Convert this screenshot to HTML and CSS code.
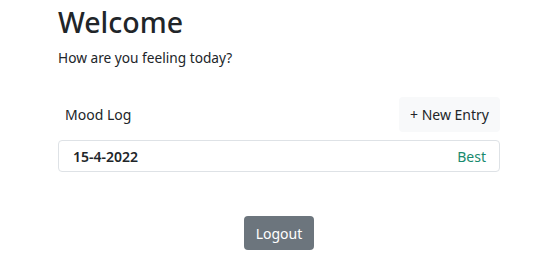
FILE: index.html
```html
<!DOCTYPE html>
<html lang="en">
<head>
<meta charset="utf-8">
<link rel="stylesheet" href="styles.css">
</head>
<body>
<div class="container">
  <h1 class="title">Welcome</h1>
  <p class="lead">How are you feeling today?</p>
  <div class="log-head">
    <span class="log-title">Mood Log</span>
    <button class="btn btn-light">+ New Entry</button>
  </div>
  <ul class="list">
    <li class="item"><span class="date">15-4-2022</span><span class="mood">Best</span></li>
  </ul>
  <div class="actions">
    <button class="btn btn-secondary">Logout</button>
  </div>
</div>
</body>
</html>
```
FILE: styles.css
```css
* { box-sizing: border-box; }
body {
  margin: 0;
  font-family: "Noto Sans", "Open Sans", sans-serif;
  color: #212529;
  background: #fff;
  font-size: 14px;
}
.container {
  width: 442px;
  margin: 0 0 0 58px;
  padding-top: 5px;
}
.title {
  margin: 0;
  font-size: 28.5px;
  font-weight: 500;
  line-height: 1.2;
}
.lead {
  margin: 9px 0 0;
  font-size: 13.7px;
}
.log-head {
  margin-top: 30px;
  display: flex;
  justify-content: space-between;
  align-items: center;
}
.log-title {
  padding-left: 7px;
  font-size: 14px;
}
.btn {
  font-family: inherit;
  border: 0;
  border-radius: 4px;
  font-size: 14px;
  cursor: pointer;
}
.btn-light {
  background: #f8f9fa;
  color: #212529;
  height: 35px;
  padding: 0 11px;
}
.list {
  list-style: none;
  margin: 8px 0 0;
  padding: 0;
}
.item {
  height: 32px;
  border: 1px solid #dee2e6;
  border-radius: 4px;
  display: flex;
  justify-content: space-between;
  align-items: center;
  padding: 0 13px 0 14px;
}
.date { font-weight: 600; font-size: 14px; }
.mood { color: #198a6e; font-size: 14px; }
.actions {
  margin-top: 44px;
  display: flex;
  justify-content: center;
}
.btn-secondary {
  background: #6c757d;
  color: #fff;
  height: 34px;
  padding: 0 12px;
}
```
